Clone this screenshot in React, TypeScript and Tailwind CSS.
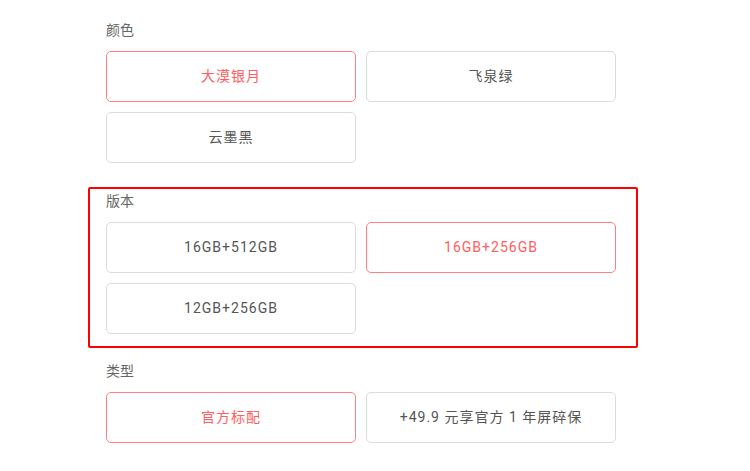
import React from "react";

type Opt = { label: string; active?: boolean };

function Options({ items }: { items: Opt[] }) {
  return (
    <div className="grid grid-cols-[250px_250px] gap-x-[10px] gap-y-[10px]">
      {items.map((o) => (
        <div
          key={o.label}
          className={
            o.active
              ? "flex h-[51px] items-center justify-center rounded-[5px] border border-[#ff8080] text-[14px] tracking-[1px] text-[#ff5e5e]"
              : "flex h-[51px] items-center justify-center rounded-[5px] border border-[#dcdcdc] text-[14px] tracking-[1px] text-[#555]"
          }
        >
          {o.label}
        </div>
      ))}
    </div>
  );
}

function Label({ text }: { text: string }) {
  return <div className="mb-[10px] h-[21px] text-[14px] leading-[21px] text-[#666]">{text}</div>;
}

export default function App() {
  return (
    <div
      className="h-[471px] w-[750px] overflow-hidden bg-white pt-[20px]"
      style={{ fontFamily: 'Roboto, "Noto Sans CJK SC", sans-serif' }}
    >
      <div className="ml-[88px] w-[550px]">
        <div className="pl-[18px]">
          <Label text="颜色" />
          <Options items={[{ label: "大漠银月", active: true }, { label: "飞泉绿" }, { label: "云墨黑" }]} />
        </div>
        <div className="mt-[24px] rounded-[2px] border-2 border-[#ff0000] pb-[12px] pl-[16px] pt-[2px]">
          <Label text="版本" />
          <Options
            items={[{ label: "16GB+512GB" }, { label: "16GB+256GB", active: true }, { label: "12GB+256GB" }]}
          />
        </div>
        <div className="mt-[13px] pl-[18px]">
          <Label text="类型" />
          <Options items={[{ label: "官方标配", active: true }, { label: "+49.9 元享官方 1 年屏碎保" }]} />
        </div>
      </div>
    </div>
  );
}
